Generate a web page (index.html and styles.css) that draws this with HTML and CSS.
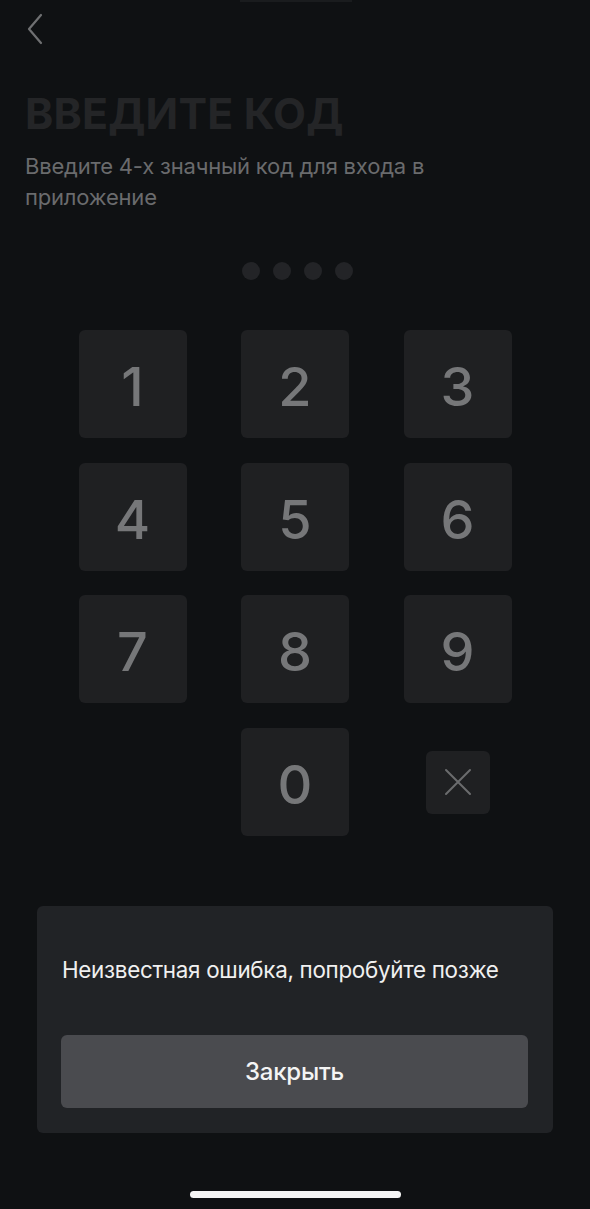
FILE: index.html
```html
<!DOCTYPE html>
<html lang="ru">
<head>
<meta charset="utf-8">
<link rel="stylesheet" href="styles.css">
</head>
<body>
<div class="screen">
  <div class="topline"></div>
  <header class="nav">
    <svg class="back" width="18" height="32" viewBox="0 0 18 32"><path d="M15 2 L3 16 L15 30" fill="none" stroke="#6f7072" stroke-width="2.2" stroke-linecap="round" stroke-linejoin="round"/></svg>
  </header>
  <h1 class="title">ВВЕДИТЕ КОД</h1>
  <p class="subtitle">Введите 4-х значный код для входа в приложение</p>
  <div class="dots"><span></span><span></span><span></span><span></span></div>
  <div class="keypad">
    <div class="key">1</div><div class="key">2</div><div class="key">3</div>
    <div class="key">4</div><div class="key">5</div><div class="key">6</div>
    <div class="key">7</div><div class="key">8</div><div class="key">9</div>
    <div class="empty"></div><div class="key">0</div>
    <div class="cell"><div class="del"><svg width="30" height="30" viewBox="0 0 30 30"><path d="M3 3 L27 27 M27 3 L3 27" stroke="#6b6c6e" stroke-width="2" stroke-linecap="round"/></svg></div></div>
  </div>
  <p class="forgot">Забыли код?</p>

  <div class="dialog">
    <p class="msg">Неизвестная ошибка, попробуйте позже</p>
    <button class="btn">Закрыть</button>
  </div>
  <div class="home"></div>
</div>
</body>
</html>
```
FILE: styles.css
```css
html, body {
  margin: 0;
  padding: 0;
  background: #0f1113;
}
.screen {
  position: relative;
  width: 590px;
  height: 1209px;
  overflow: hidden;
  font-family: "Inter", "Roboto", "Liberation Sans", sans-serif;
}
.topline {
  position: absolute;
  left: 240px;
  top: 0;
  width: 112px;
  height: 2px;
  background: #1a1c1e;
}
.nav {
  padding: 13px 0 0 26px;
  height: 33px;
}
.back { display: block; }
.title {
  margin: 42px 0 0 25px;
  font-size: 42.8px;
  line-height: 52px;
  font-weight: 700;
  color: #242527;
  letter-spacing: 0.2px;
}
.subtitle {
  margin: 11px 0 0 25px;
  width: 440px;
  font-size: 22px;
  line-height: 31px;
  color: #6a6b6d;
  letter-spacing: -0.2px;
}
.dots {
  display: flex;
  justify-content: center;
  gap: 13px;
  margin-top: 49px;
  padding-left: 4px;
}
.dots span {
  width: 18px;
  height: 18px;
  border-radius: 50%;
  background: #232427;
}
.keypad {
  display: grid;
  grid-template-columns: repeat(3, 108px);
  grid-auto-rows: 108px;
  column-gap: 54.5px;
  row-gap: 24.7px;
  justify-content: center;
  margin-top: 50px;
}
.key {
  background: #1f2022;
  border-radius: 6px;
  display: flex;
  align-items: center;
  justify-content: center;
  padding-top: 5px;
  box-sizing: border-box;
  font-family: "Inter", "Liberation Sans", sans-serif;
  font-size: 54px;
  font-weight: 500;
  color: #767779;
}
.cell {
  display: flex;
  align-items: center;
  justify-content: center;
}
.del {
  width: 64px;
  height: 63px;
  border-radius: 6px;
  background: #1f2022;
  display: flex;
  align-items: center;
  justify-content: center;
}
.forgot {
  margin: 67px 0 0;
  text-align: center;
  font-size: 20px;
  color: #202123;
}
.dialog {
  position: absolute;
  left: 37px;
  top: 906px;
  width: 516px;
  height: 227px;
  box-sizing: border-box;
  background: #212326;
  border-radius: 6px;
  padding: 49px 24px 0 24px;
}
.msg {
  margin: 0 0 0 1px;
  font-size: 22.4px;
  line-height: 30px;
  color: #f0f0f0;
  letter-spacing: -0.3px;
}
.btn {
  display: block;
  margin-top: 50px;
  width: 467px;
  height: 73px;
  border: none;
  border-radius: 6px;
  background: #4a4b4f;
  color: #f4f4f4;
  font-family: "Inter", "Roboto", "Liberation Sans", sans-serif;
  font-size: 24px;
  font-weight: 500;
  letter-spacing: -0.2px;
}
.home {
  position: absolute;
  left: 190px;
  top: 1191px;
  width: 211px;
  height: 7px;
  border-radius: 4px;
  background: #f5f5f5;
}
```
